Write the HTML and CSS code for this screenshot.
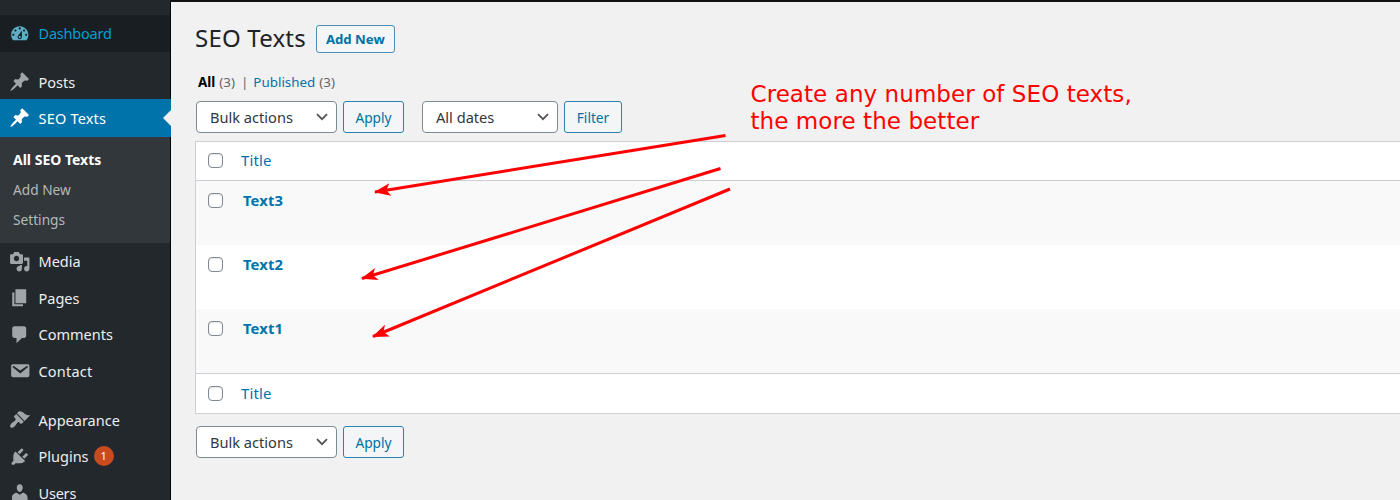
FILE: index.html
```html
<!DOCTYPE html>
<html lang="en">
<head>
<meta charset="utf-8">
<title>SEO Texts</title>
<link rel="stylesheet" href="styles.css">
</head>
<body>
<div class="page">
  <nav class="sidebar">
    <a class="item item-dashboard"><svg class="icon" viewBox="0 0 20 20"><path fill-rule="evenodd" d="M3.76 16h12.48c1.1-1.37 1.76-3.11 1.76-5 0-4.42-3.58-8-8-8s-8 3.58-8 8c0 1.89.66 3.63 1.76 5zM10 4c.55 0 1 .45 1 1s-.45 1-1 1-1-.45-1-1 .45-1 1-1zM6 6c.55 0 1 .45 1 1s-.45 1-1 1-1-.45-1-1 .45-1 1-1zm8 0c.55 0 1 .45 1 1s-.45 1-1 1-1-.45-1-1 .45-1 1-1zm-5.370 5.550L12 7v6c0 1.100-.9 2-2 2s-2-.9-2-2c0-.57.24-1.080.63-1.450zM4 10c.55 0 1 .45 1 1s-.45 1-1 1-1-.45-1-1 .45-1 1-1zm12 0c.55 0 1 .45 1 1s-.45 1-1 1-1-.45-1-1 .45-1 1-1zm-5 3c0-.55-.45-1-1-1s-1 .45-1 1 .45 1 1 1 1-.45 1-1z"/></svg><span class="label narrow">Dashboard</span></a>
    <a class="item"><svg class="icon" viewBox="0 0 20 20"><path d="M10.44 3.02l1.82-1.82 6.36 6.35-1.83 1.82c-1.05-.68-2.48-.57-3.41.36l-.75.75c-.92.93-1.04 2.35-.35 3.41l-1.83 1.82-2.41-2.41-2.8 2.79c-.42.42-3.38 2.71-3.8 2.29s1.86-3.39 2.28-3.81l2.79-2.79L4.1 9.36l1.83-1.82c1.05.69 2.48.57 3.4-.36l.75-.75c.93-.92 1.05-2.35.36-3.41z"/></svg><span class="label">Posts</span></a>
    <a class="item item-current"><svg class="icon" viewBox="0 0 20 20"><path d="M10.44 3.02l1.82-1.82 6.36 6.35-1.83 1.82c-1.05-.68-2.48-.57-3.41.36l-.75.75c-.92.93-1.04 2.35-.35 3.41l-1.83 1.82-2.41-2.41-2.8 2.79c-.42.42-3.38 2.71-3.8 2.29s1.86-3.39 2.28-3.81l2.79-2.79L4.1 9.36l1.83-1.82c1.05.69 2.48.57 3.4-.36l.75-.75c.93-.92 1.05-2.35.36-3.41z"/></svg><span class="label wide">SEO Texts</span></a>
    <div class="submenu">
      <a class="sub sub-current">All SEO Texts</a>
      <a class="sub">Add New</a>
      <a class="sub">Settings</a>
    </div>
    <a class="item"><svg class="icon" viewBox="0 0 20 20"><path fill-rule="evenodd" d="M13 11V4c0-.55-.45-1-1-1h-1.67L9 1H5L3.67 3H2c-.55 0-1 .45-1 1v7c0 .55.45 1 1 1h10c.55 0 1-.45 1-1zM7 4.5c1.38 0 2.5 1.12 2.5 2.5S8.38 9.5 7 9.5 4.5 8.38 4.5 7 5.62 4.5 7 4.5zM14 6h5v10.5c0 1.38-1.12 2.5-2.5 2.5S14 17.88 14 16.5s1.12-2.5 2.5-2.5c.17 0 .34.02.5.05V9h-3V6zm-4 8.05V13h2v3.5c0 1.38-1.12 2.5-2.5 2.5S7 17.88 7 16.5 8.12 14 9.5 14c.17 0 .34.02.5.05z"/></svg><span class="label">Media</span></a>
    <a class="item"><svg class="icon" viewBox="0 0 20 20"><path d="M6 15V2h10v13H6zm-1 1h8v2H3V5h2v11z"/></svg><span class="label">Pages</span></a>
    <a class="item"><svg class="icon" viewBox="0 0 20 20"><path d="M5 2h9c1.1 0 2 .9 2 2v7c0 1.1-.9 2-2 2h-2l-5 5v-5H5c-1.1 0-2-.9-2-2V4c0-1.1.9-2 2-2z"/></svg><span class="label">Comments</span></a>
    <a class="item"><svg class="icon" viewBox="0 0 20 20"><path fill-rule="evenodd" d="M3.87 4h13.25C18.37 4 19 4.59 19 5.79v8.42c0 1.19-.63 1.79-1.88 1.79H3.87c-1.25 0-1.88-.6-1.88-1.79V5.79c0-1.2.63-1.79 1.88-1.79zm6.62 8.6l6.74-5.53c.24-.2.43-.66.13-1.07-.29-.41-.82-.42-1.17-.17l-5.7 3.86L4.8 5.83c-.35-.25-.88-.24-1.17.17-.3.41-.11.87.13 1.07z"/></svg><span class="label wide">Contact</span></a>
    <a class="item item-appearance"><svg class="icon" viewBox="0 0 20 20"><path d="M14.48 11.06L7.41 3.99l1.5-1.5c.5-.56 2.3-.47 3.51.32 1.21.8 1.43 1.28 2.91 2.1 1.18.64 2.45 1.26 4.45.85zm-.71.71L6.7 4.7 4.93 6.47c-.39.39-.39 1.02 0 1.41l1.06 1.06c.39.39.39 1.03 0 1.42-.6.6-1.43 1.11-2.21 1.69-.35.26-.7.53-1.01.84C1.43 14.23.4 16.08 1.4 17.07c.99 1 2.84-.03 4.18-1.36.31-.31.58-.66.85-1.02.57-.78 1.08-1.61 1.69-2.21.39-.39 1.02-.39 1.41 0l1.06 1.06c.39.39 1.02.39 1.41 0z"/></svg><span class="label">Appearance</span></a>
    <a class="item"><svg class="icon" viewBox="0 0 20 20"><path d="M13.11 4.36L9.87 7.6 8 5.73l3.24-3.24c.35-.34 1.05-.2 1.56.32.52.51.66 1.21.31 1.55zm-8 1.77l.91-1.12 9.01 9.01-1.19.84c-.71.71-2.63 1.16-3.82 1.16H6.14L4.9 17.26c-.59.59-1.54.59-2.12 0-.59-.58-.59-1.53 0-2.12l1.24-1.24v-3.88c0-1.13.4-3.19 1.09-3.89zm7.26 3.97l3.24-3.24c.34-.35 1.04-.21 1.55.31.52.51.66 1.21.31 1.55l-3.24 3.25z"/></svg><span class="label">Plugins</span><span class="count">1</span></a>
    <a class="item"><svg class="icon" viewBox="0 0 20 20"><path d="M10 9.25c-2.27 0-2.73-3.44-2.73-3.44C7 4.02 7.82 2 9.97 2c2.16 0 2.98 2.02 2.71 3.81 0 0-.41 3.44-2.68 3.44zm0 2.57L12.72 10c2.39 0 4.52 2.33 4.52 4.53v2.49s-3.65 1.13-7.24 1.13c-3.65 0-7.24-1.13-7.24-1.13v-2.49c0-2.25 1.94-4.48 4.47-4.48z"/></svg><span class="label narrow">Users</span></a>
  </nav>
  <main class="content">
    <header class="heading">
      <h1 class="title">SEO Texts</h1>
      <a class="add-new">Add New</a>
    </header>
    <div class="views"><b class="view-all">All</b><span class="num">(3)</span><span class="bar">|</span><a class="view-link">Published</a><span class="num">(3)</span></div>
    <div class="tablenav">
      <div class="select select-bulk"><span>Bulk actions</span><svg class="chevron" viewBox="0 0 12 8"><path d="M1 1.2l5 5 5-5"/></svg></div>
      <a class="button button-apply">Apply</a>
      <div class="select select-dates"><span>All dates</span><svg class="chevron" viewBox="0 0 12 8"><path d="M1 1.2l5 5 5-5"/></svg></div>
      <a class="button button-filter">Filter</a>
    </div>
    <div class="table">
      <div class="row row-head"><i class="check"></i><a class="column">Title</a></div>
      <div class="row row-item shaded"><i class="check"></i><a class="row-title">Text3</a></div>
      <div class="row row-item"><i class="check"></i><a class="row-title">Text2</a></div>
      <div class="row row-item shaded"><i class="check"></i><a class="row-title">Text1</a></div>
      <div class="row row-foot"><i class="check"></i><a class="column">Title</a></div>
    </div>
    <div class="tablenav tablenav-bottom">
      <div class="select select-bulk"><span>Bulk actions</span><svg class="chevron" viewBox="0 0 12 8"><path d="M1 1.2l5 5 5-5"/></svg></div>
      <a class="button button-apply">Apply</a>
    </div>
  </main>
  <svg class="arrows" viewBox="0 0 1400 500">
    <defs>
      <marker id="head" markerUnits="userSpaceOnUse" markerWidth="18" markerHeight="14" refX="15.500" refY="6.5" orient="auto"><path d="M16.500 6.5L0 0.2L4 6.5L0 12.8z"/></marker>
    </defs>
    <path class="shaft" marker-end="url(#head)" d="M725.500 135.500L375 192"/>
    <path class="shaft" marker-end="url(#head)" d="M720.500 168.500L362 278.500"/>
    <path class="shaft" marker-end="url(#head)" d="M730 189L373 336.500"/>
  </svg>
  <p class="note">Create any number of SEO texts,<br>the more the better</p>
</div>
</body>
</html>
```
FILE: styles.css
```css
* { box-sizing: border-box; }
body { margin: 0; font-family: "Noto Sans", sans-serif; background: #f1f1f1; }
.page { position: relative; display: flex; width: 1400px; height: 500px; overflow: hidden; }

.sidebar { flex: none; width: 171px; height: 500px; padding-top: 15px; overflow: hidden; background: linear-gradient(90deg, #23282d 170px, #050505 170px); }
.item { display: flex; align-items: center; height: 36.5px; padding-left: 9px; color: #eee; fill: #a0a5aa; font-size: 14.5px; }
.icon { flex: none; width: 21.5px; height: 21.5px; margin-right: 8px; }
.label { line-height: 20px; }
.narrow { letter-spacing: -0.2px; }
.wide { letter-spacing: 0.2px; }
.item-dashboard { margin: 0 1px 12px 0; background: #191e23; color: #00a0d2; fill: #5cafc6; }
.item-current { position: relative; height: 38px; margin-top: -1px; background: #0073aa; color: #fff; fill: #fff; }
.item-current::after { content: ""; position: absolute; right: 0; top: 11px; border: 8px solid transparent; border-left: 0; border-right-color: #f1f1f1; }
.item-appearance { margin-top: 12.5px; }
.submenu { height: 106px; margin-right: 1px; padding-top: 8px; background: #32373c; }
.sub { display: block; height: 30px; padding-left: 13px; line-height: 30px; font-size: 13.7px; color: #b4b9be; }
.sub-current { font-size: 14px; font-weight: 700; color: #fff; }
.count { width: 20px; height: 20px; margin-left: 5px; border-radius: 50%; background: #ca4a1f; color: #fff; font-size: 11px; line-height: 20px; text-align: center; }

.content { flex: 1; height: 500px; padding-left: 24px; border-top: 2px solid #101214; }
.heading { display: flex; align-items: center; height: 47px; padding-top: 27px; }
.title { margin: -2px 0 0; font-size: 24px; font-weight: 400; letter-spacing: 0.2px; line-height: 30px; color: #1d2327; }
.add-new { height: 28px; margin-left: 10px; padding: 0 9px; border: 1px solid #4f8db3; border-radius: 3px; background: #f3f5f6; color: #0071a1; font-size: 13.2px; font-weight: 700; line-height: 26px; }
.views { display: flex; margin-top: 23px; padding-left: 3px; font-size: 13.4px; line-height: 20px; color: #666; }
.view-all { margin-right: 4px; color: #000; }
.bar { margin: 0 5px 0 6px; }
.view-link { margin-right: 4px; color: #0073aa; }
.tablenav { display: flex; height: 32px; margin: 9px 0 0 1px; }
.select { display: flex; align-items: center; justify-content: space-between; padding: 0 8px 0 13px; border: 1px solid #7e8993; border-radius: 4px; background: #fff; color: #32373c; font-size: 14.6px; line-height: 20px; }
.select-bulk { width: 141px; }
.select-dates { width: 136px; margin-left: 18px; }
.chevron { width: 12px; height: 8px; fill: none; stroke: #555; stroke-width: 1.8; }
.button { height: 32px; margin-left: 6px; border: 1px solid #2b82ae; border-radius: 3px; background: #f3f5f6; color: #0071a1; font-size: 13.7px; line-height: 31px; text-align: center; }
.button-apply { width: 61px; }
.button-filter { width: 58px; }

.table { height: 273px; margin-top: 8px; border: 1px solid #ccd0d4; border-right: 0; background: #fff; }
.row { display: flex; padding-left: 12px; }
.row-head, .row-foot { height: 39px; padding-bottom: 1px; align-items: center; }
.row-head { border-bottom: 1px solid #ccd0d4; }
.row-foot { height: 40px; border-top: 1px solid #ccd0d4; }
.row-item { height: 64px; padding-top: 12px; }
.shaded { background: #f9f9f9; }
.check { flex: none; width: 15px; height: 15px; border: 1px solid #7e8993; border-radius: 4px; background: #fff; box-shadow: inset 0 1px 2px rgba(0, 0, 0, 0.1); }
.column { margin: -1px 0 0 18px; font-size: 14.9px; letter-spacing: 0.15px; line-height: 20px; color: #0073aa; }
.row-title { margin: -3px 0 0 20px; font-size: 14.8px; font-weight: 700; letter-spacing: 0.1px; line-height: 20px; color: #0073aa; }
.tablenav-bottom { margin-top: 12px; }

.arrows { position: absolute; left: 0; top: 0; width: 1400px; height: 500px; fill: #f00; }
.shaft { stroke: #f00; stroke-width: 3; fill: none; }
.note { position: absolute; left: 750.5px; top: 81px; margin: 0; color: #f00; font-family: "DejaVu Sans", sans-serif; font-size: 23px; letter-spacing: 0.07px; line-height: 27px; white-space: nowrap; }
```
